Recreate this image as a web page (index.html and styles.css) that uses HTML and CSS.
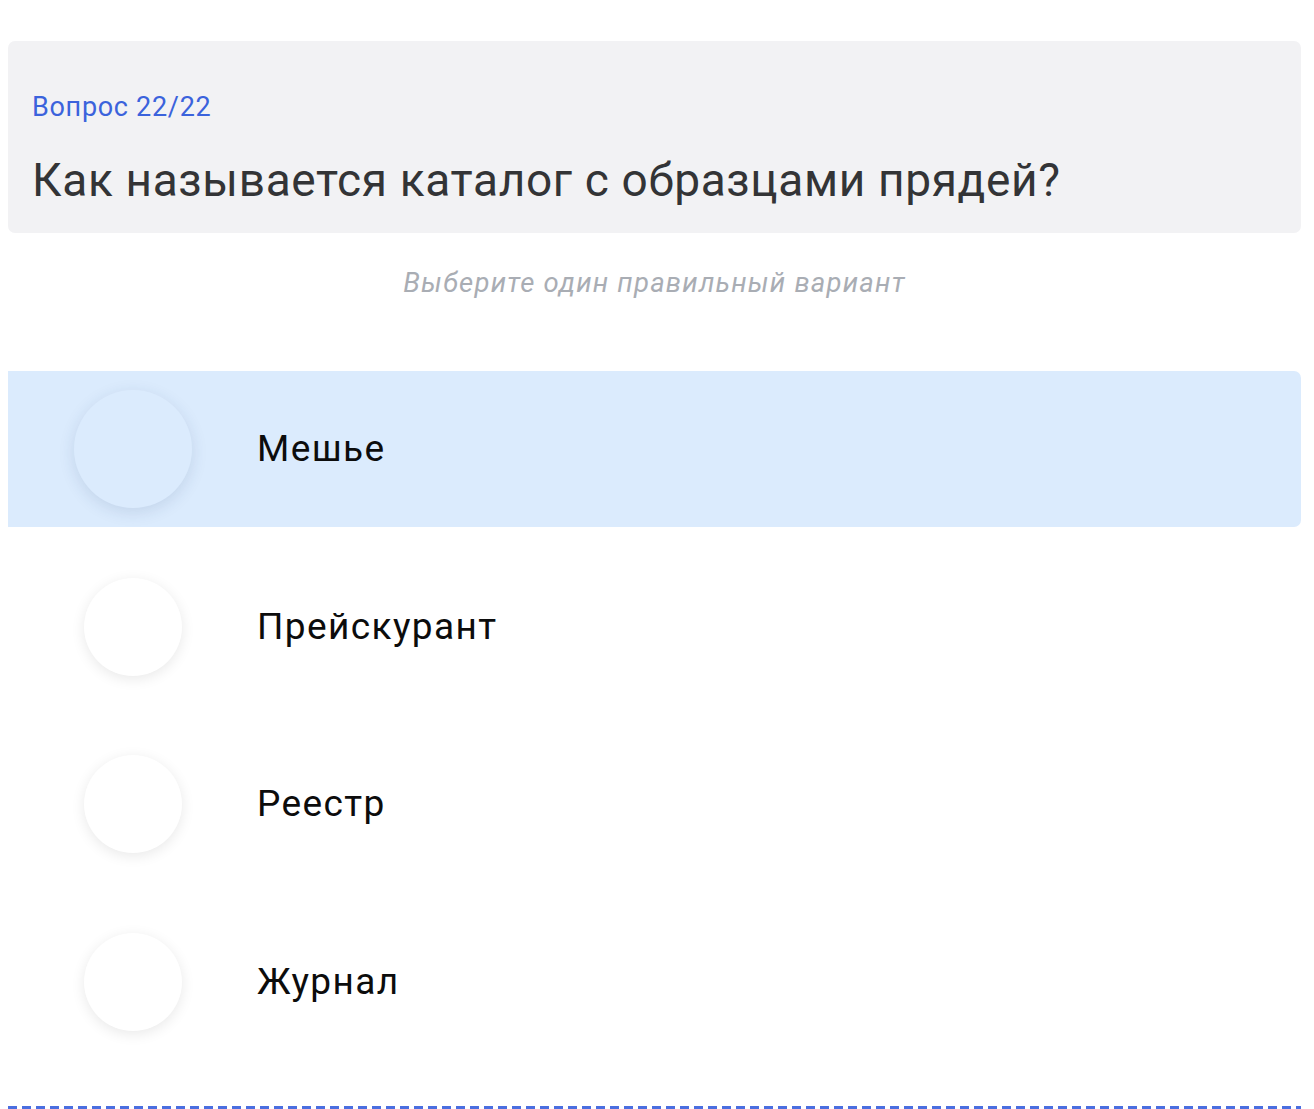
FILE: index.html
```html
<!DOCTYPE html>
<html lang="ru">
<head>
<meta charset="utf-8">
<link rel="stylesheet" href="styles.css">
</head>
<body>
<main class="page">
  <section class="card">
    <div class="counter">Вопрос 22/22</div>
    <h1 class="question">Как называется каталог с образцами прядей?</h1>
  </section>
  <p class="hint">Выберите один правильный вариант</p>
  <ul class="options">
    <li class="option selected"><span class="radio"></span><span class="label">Мешье</span></li>
    <li class="option"><span class="radio"></span><span class="label">Прейскурант</span></li>
    <li class="option"><span class="radio"></span><span class="label">Реестр</span></li>
    <li class="option"><span class="radio"></span><span class="label">Журнал</span></li>
  </ul>
  <div class="divider"></div>
</main>
</body>
</html>
```
FILE: styles.css
```css
html, body {
  margin: 0;
  padding: 0;
  background: #ffffff;
}
body {
  font-family: Roboto, "Noto Sans", sans-serif;
  height: 1109px;
  overflow: hidden;
}
.page {
  padding: 41px 13px 0 8px;
}
.card {
  background: #f2f2f4;
  border-radius: 7px;
  height: 192px;
  box-sizing: border-box;
  padding: 51px 24px 0 24px;
}
.counter {
  font-size: 27px;
  line-height: 30px;
  letter-spacing: 0.7px;
  color: #3b63dc;
}
.question {
  margin: 31px 0 0 0;
  font-size: 46px;
  line-height: 54px;
  font-weight: 400;
  letter-spacing: 0.65px;
  color: #333436;
}
.hint {
  margin: 33px 0 0 0;
  text-align: center;
  font-size: 27.5px;
  line-height: 34px;
  font-style: italic;
  letter-spacing: 1.2px;
  color: #a9adb4;
}
.options {
  list-style: none;
  margin: 71px 0 0 0;
  padding: 0;
  display: flex;
  flex-direction: column;
  gap: 21.5px;
}
.option {
  height: 156px;
  display: flex;
  align-items: center;
  border-radius: 0 7px 7px 0;
}
.option.selected {
  background: #dbebfd;
}
.radio {
  flex: none;
  width: 98px;
  height: 98px;
  margin: 0 75px 0 76px;
  border-radius: 50%;
  background: #ffffff;
  box-shadow: 0 3px 14px rgba(0, 0, 0, 0.09);
}
.selected .radio {
  width: 118px;
  height: 118px;
  margin: 0 65px 0 66px;
  background: #dbebfd;
  box-shadow: 0 4px 16px rgba(30, 60, 110, 0.13);
}
.label {
  font-size: 37px;
  line-height: 44px;
  letter-spacing: 1.4px;
  color: #0c0c0c;
}
.divider {
  margin-top: 46px;
  height: 3px;
  background: repeating-linear-gradient(90deg, #4a6ee0 0 9px, transparent 9px 14px);
}
```
